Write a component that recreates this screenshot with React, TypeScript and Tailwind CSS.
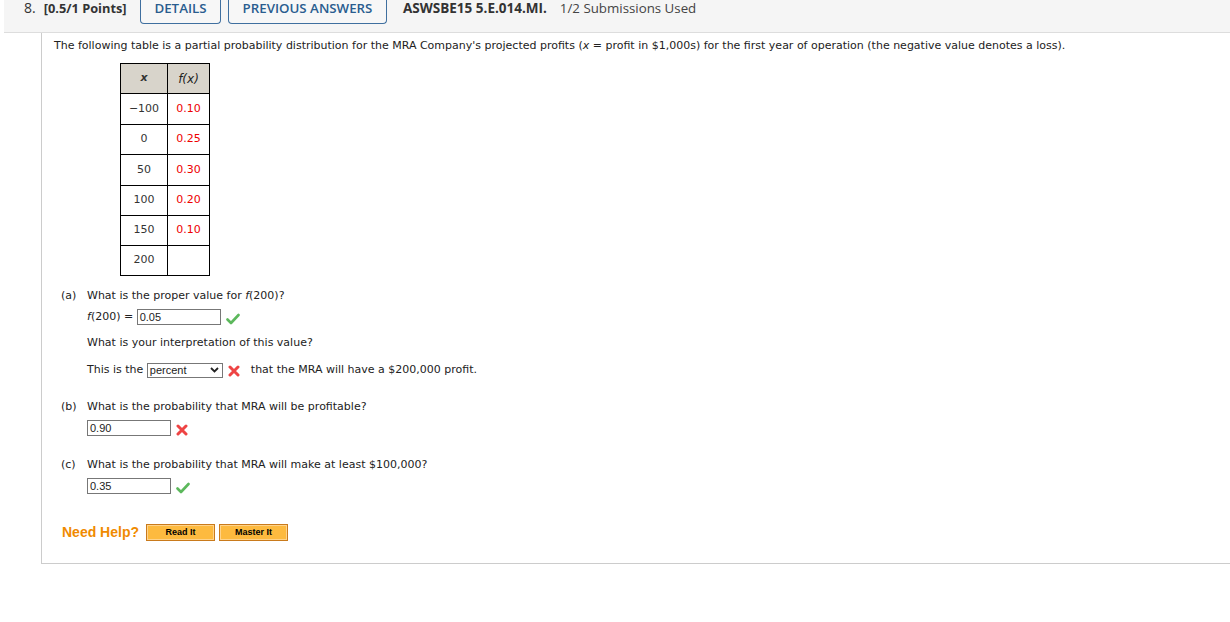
import React from 'react';

const Check = () => (
  <svg width="14" height="12" viewBox="0 0 14 12" className="block">
    <path d="M1.5 6.5 L5 10 L12.5 2" fill="none" stroke="#5cb85c" strokeWidth="2.6" strokeLinecap="round" strokeLinejoin="round" />
  </svg>
);

const Cross = () => (
  <svg width="12" height="12" viewBox="0 0 12 12" className="block">
    <path d="M2 2 L10 10 M10 2 L2 10" fill="none" stroke="#ee4444" strokeWidth="3" strokeLinecap="round" />
  </svg>
);

const rows = [
  { x: '\u2212100', fx: '0.10', h: 'h-[31px]' },
  { x: '0', fx: '0.25', h: 'h-[30px]' },
  { x: '50', fx: '0.30', h: 'h-[31px]' },
  { x: '100', fx: '0.20', h: 'h-[30px]' },
  { x: '150', fx: '0.10', h: 'h-[30px]' },
  { x: '200', fx: '', h: 'h-[30px]' },
];

const Answer = ({ value }: { value: string }) => (
  <span className="inline-block w-[84px] h-[16px] border border-[#777] bg-white px-[2px] text-[11px] leading-[14px] text-[#222] font-['Liberation_Sans',Arial,sans-serif]">
    {value}
  </span>
);

export default function App() {
  return (
    <div className="min-h-[622px] bg-white text-[#222] font-['DejaVu_Sans',Verdana,sans-serif]">
      {/* header */}
      <div className="ml-[4px] h-[33px] bg-[#f5f5f5] border-b border-[#ddd] flex items-start font-['Open_Sans',sans-serif]">
        <div className="flex items-baseline pl-[20px] w-[136px] shrink-0 leading-[16px]">
          <span className="text-[14px] text-[#333] mr-[8px]">8.</span>
          <span className="text-[12.8px] font-bold text-[#333]">[0.5/1 Points]</span>
        </div>
        <button className="h-[24px] w-[81px] border border-t-0 border-[#3f6f9f] rounded-b-[4px] text-[13.3px] font-semibold text-[#2a5d8f] bg-[#f7f7f7] leading-[16px] pb-[7px]">DETAILS</button>
        <button className="ml-[7px] h-[24px] w-[159px] border border-t-0 border-[#3f6f9f] rounded-b-[4px] text-[13.3px] font-semibold text-[#2a5d8f] bg-[#f7f7f7] leading-[16px] pb-[7px]">PREVIOUS ANSWERS</button>
        <span className="ml-[16px] text-[13.5px] font-bold text-[#333] leading-[16px]">ASWSBE15 5.E.014.MI.</span>
        <span className="ml-[13px] text-[13.3px] text-[#444] leading-[16px]">1/2 Submissions Used</span>
      </div>

      {/* body */}
      <div className="ml-[41px] border-l border-b border-[#ccc] h-[531px] pl-[12px] pt-[5px] text-[11px]">
        <p className="leading-[16px]">
          The following table is a partial probability distribution for the MRA Company's projected profits (<i>x</i> = profit in $1,000s) for the first year of operation (the negative value denotes a loss).
        </p>

        <table className="ml-[66px] mt-[9px] border-collapse border border-black text-[11px]">
          <thead>
            <tr className="h-[30px] bg-[#d8d4cb]">
              <th className="w-[47px] border border-black font-bold italic text-[#333]">x</th>
              <th className="w-[42px] border border-black font-normal italic text-[12px]">f(x)</th>
            </tr>
          </thead>
          <tbody>
            {rows.map((r) => (
              <tr key={r.x} className={r.h}>
                <td className="border border-black text-center text-[#333]">{r.x}</td>
                <td className="border border-black text-center text-[#e00]">{r.fx}</td>
              </tr>
            ))}
          </tbody>
        </table>

        <div className="mt-[13px] ml-[7px]">
          <div className="flex">
            <span className="w-[26px] leading-[14px]">(a)</span>
            <div className="flex flex-col">
              <span className="leading-[14px]">What is the proper value for <i>f</i>(200)?</span>
              <div className="mt-[6px] h-[16px] flex items-center">
                <span><i>f</i>(200) =&nbsp;</span>
                <Answer value="0.05" />
                <span className="ml-[5px] mt-[4px]"><Check /></span>
              </div>
              <span className="mt-[11px] leading-[14px]">What is your interpretation of this value?</span>
              <div className="mt-[12px] h-[16px] flex items-center">
                <span>This is the&nbsp;</span>
                <span className="inline-flex items-center justify-between w-[76px] h-[15px] border border-[#777] bg-white pl-[2px] pr-[3px] text-[11px] leading-[13px] font-['Liberation_Sans',Arial,sans-serif]">
                  percent
                  <svg width="9" height="6" viewBox="0 0 9 6"><path d="M1 1 L4.5 4.5 L8 1" fill="none" stroke="#222" strokeWidth="1.8" /></svg>
                </span>
                <span className="ml-[5px] mt-[1px]"><Cross /></span>
                <span className="ml-[11px]">that the MRA will have a $200,000 profit.</span>
              </div>
            </div>
          </div>

          <div className="flex mt-[22px]">
            <span className="w-[26px] leading-[14px]">(b)</span>
            <div className="flex flex-col">
              <span className="leading-[14px]">What is the probability that MRA will be profitable?</span>
              <div className="mt-[6px] h-[16px] flex items-center">
                <Answer value="0.90" />
                <span className="ml-[5px] mt-[3px]"><Cross /></span>
              </div>
            </div>
          </div>

          <div className="flex mt-[22px]">
            <span className="w-[26px] leading-[14px]">(c)</span>
            <div className="flex flex-col">
              <span className="leading-[14px]">What is the probability that MRA will make at least $100,000?</span>
              <div className="mt-[6px] h-[16px] flex items-center">
                <Answer value="0.35" />
                <span className="ml-[5px] mt-[4px]"><Check /></span>
              </div>
            </div>
          </div>
        </div>

        <div className="mt-[29px] ml-[8px] h-[18px] flex items-center font-['Liberation_Sans',Arial,sans-serif]">
          <span className="text-[14px] font-bold text-[#f08a00] mr-[7px]">Need Help?</span>
          <button className="w-[69px] h-[17px] border border-[#c97a1c] bg-[#fdba3f] shadow-[inset_0_0_0_1px_#ffd38a] text-[9px] font-bold text-black leading-[14px]">Read It</button>
          <button className="ml-[4px] w-[69px] h-[17px] border border-[#c97a1c] bg-[#fdba3f] shadow-[inset_0_0_0_1px_#ffd38a] text-[9px] font-bold text-black leading-[14px]">Master It</button>
        </div>
      </div>
    </div>
  );
}
